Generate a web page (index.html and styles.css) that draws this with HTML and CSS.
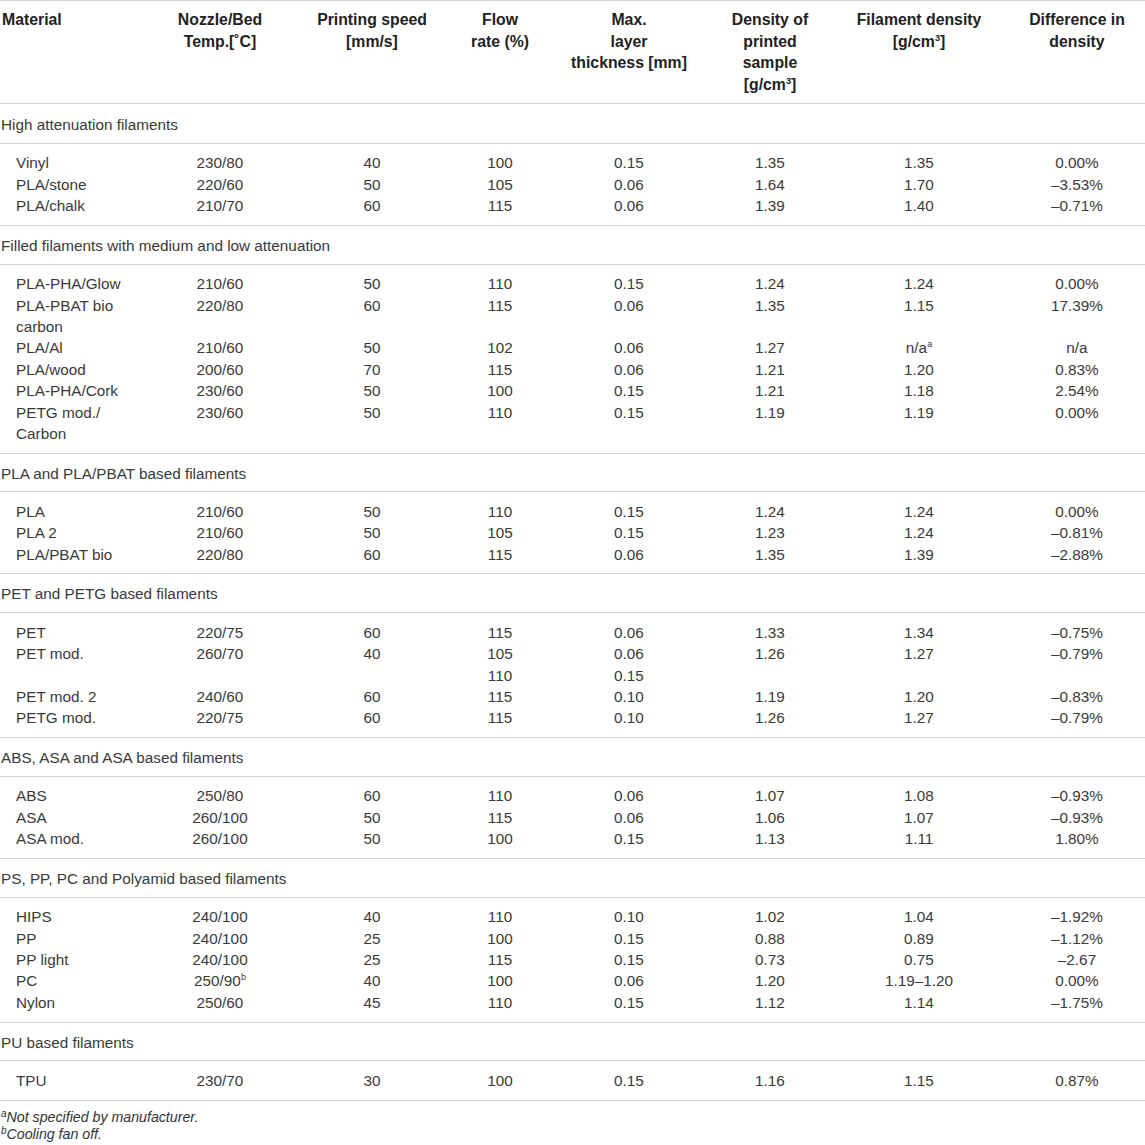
FILE: index.html
```html
<!DOCTYPE html>
<html lang="en">
<head>
<meta charset="utf-8">
<title>Printing parameters and densities</title>
<link rel="stylesheet" href="styles.css">
</head>
<body>
<table class="tbl">
  <colgroup>
    <col class="c1"><col class="c2"><col class="c3"><col class="c4"><col class="c5"><col class="c6"><col class="c7"><col class="c8">
  </colgroup>
  <thead>
    <tr>
      <th class="left">Material</th>
      <th>Nozzle/Bed<br>Temp.[˚C]</th>
      <th>Printing speed<br>[mm/s]</th>
      <th>Flow<br>rate (%)</th>
      <th>Max.<br>layer<br>thickness [mm]</th>
      <th>Density of<br>printed<br>sample<br>[g/cm<sup>3</sup>]</th>
      <th>Filament density<br>[g/cm<sup>3</sup>]</th>
      <th>Difference in<br>density</th>
    </tr>
  </thead>

  <tbody>
    <tr class="sec top"><td colspan="8">High attenuation filaments</td></tr>
    <tr class="first"><td class="mat">Vinyl</td><td>230/80</td><td>40</td><td>100</td><td>0.15</td><td>1.35</td><td>1.35</td><td>0.00%</td></tr>
    <tr><td class="mat">PLA/stone</td><td>220/60</td><td>50</td><td>105</td><td>0.06</td><td>1.64</td><td>1.70</td><td>–3.53%</td></tr>
    <tr class="last"><td class="mat">PLA/chalk</td><td>210/70</td><td>60</td><td>115</td><td>0.06</td><td>1.39</td><td>1.40</td><td>–0.71%</td></tr>
  </tbody>

  <tbody>
    <tr class="sec"><td colspan="8">Filled filaments with medium and low attenuation</td></tr>
    <tr class="first"><td class="mat">PLA-PHA/Glow</td><td>210/60</td><td>50</td><td>110</td><td>0.15</td><td>1.24</td><td>1.24</td><td>0.00%</td></tr>
    <tr><td class="mat">PLA-PBAT bio<br>carbon</td><td>220/80</td><td>60</td><td>115</td><td>0.06</td><td>1.35</td><td>1.15</td><td>17.39%</td></tr>
    <tr><td class="mat">PLA/Al</td><td>210/60</td><td>50</td><td>102</td><td>0.06</td><td>1.27</td><td>n/a<sup>a</sup></td><td>n/a</td></tr>
    <tr><td class="mat">PLA/wood</td><td>200/60</td><td>70</td><td>115</td><td>0.06</td><td>1.21</td><td>1.20</td><td>0.83%</td></tr>
    <tr><td class="mat">PLA-PHA/Cork</td><td>230/60</td><td>50</td><td>100</td><td>0.15</td><td>1.21</td><td>1.18</td><td>2.54%</td></tr>
    <tr class="last"><td class="mat">PETG mod./<br>Carbon</td><td>230/60</td><td>50</td><td>110</td><td>0.15</td><td>1.19</td><td>1.19</td><td>0.00%</td></tr>
  </tbody>

  <tbody>
    <tr class="sec"><td colspan="8">PLA and PLA/PBAT based filaments</td></tr>
    <tr class="first"><td class="mat">PLA</td><td>210/60</td><td>50</td><td>110</td><td>0.15</td><td>1.24</td><td>1.24</td><td>0.00%</td></tr>
    <tr><td class="mat">PLA 2</td><td>210/60</td><td>50</td><td>105</td><td>0.15</td><td>1.23</td><td>1.24</td><td>–0.81%</td></tr>
    <tr class="last"><td class="mat">PLA/PBAT bio</td><td>220/80</td><td>60</td><td>115</td><td>0.06</td><td>1.35</td><td>1.39</td><td>–2.88%</td></tr>
  </tbody>

  <tbody>
    <tr class="sec"><td colspan="8">PET and PETG based filaments</td></tr>
    <tr class="first"><td class="mat">PET</td><td>220/75</td><td>60</td><td>115</td><td>0.06</td><td>1.33</td><td>1.34</td><td>–0.75%</td></tr>
    <tr><td class="mat">PET mod.</td><td>260/70</td><td>40</td><td>105<br>110</td><td>0.06<br>0.15</td><td>1.26</td><td>1.27</td><td>–0.79%</td></tr>
    <tr><td class="mat">PET mod. 2</td><td>240/60</td><td>60</td><td>115</td><td>0.10</td><td>1.19</td><td>1.20</td><td>–0.83%</td></tr>
    <tr class="last"><td class="mat">PETG mod.</td><td>220/75</td><td>60</td><td>115</td><td>0.10</td><td>1.26</td><td>1.27</td><td>–0.79%</td></tr>
  </tbody>

  <tbody>
    <tr class="sec"><td colspan="8">ABS, ASA and ASA based filaments</td></tr>
    <tr class="first"><td class="mat">ABS</td><td>250/80</td><td>60</td><td>110</td><td>0.06</td><td>1.07</td><td>1.08</td><td>–0.93%</td></tr>
    <tr><td class="mat">ASA</td><td>260/100</td><td>50</td><td>115</td><td>0.06</td><td>1.06</td><td>1.07</td><td>–0.93%</td></tr>
    <tr class="last"><td class="mat">ASA mod.</td><td>260/100</td><td>50</td><td>100</td><td>0.15</td><td>1.13</td><td>1.11</td><td>1.80%</td></tr>
  </tbody>

  <tbody>
    <tr class="sec"><td colspan="8">PS, PP, PC and Polyamid based filaments</td></tr>
    <tr class="first"><td class="mat">HIPS</td><td>240/100</td><td>40</td><td>110</td><td>0.10</td><td>1.02</td><td>1.04</td><td>–1.92%</td></tr>
    <tr><td class="mat">PP</td><td>240/100</td><td>25</td><td>100</td><td>0.15</td><td>0.88</td><td>0.89</td><td>–1.12%</td></tr>
    <tr><td class="mat">PP light</td><td>240/100</td><td>25</td><td>115</td><td>0.15</td><td>0.73</td><td>0.75</td><td>–2.67</td></tr>
    <tr><td class="mat">PC</td><td>250/90<sup>b</sup></td><td>40</td><td>100</td><td>0.06</td><td>1.20</td><td>1.19–1.20</td><td>0.00%</td></tr>
    <tr class="last"><td class="mat">Nylon</td><td>250/60</td><td>45</td><td>110</td><td>0.15</td><td>1.12</td><td>1.14</td><td>–1.75%</td></tr>
  </tbody>

  <tbody>
    <tr class="sec"><td colspan="8">PU based filaments</td></tr>
    <tr class="first last"><td class="mat">TPU</td><td>230/70</td><td>30</td><td>100</td><td>0.15</td><td>1.16</td><td>1.15</td><td>0.87%</td></tr>
  </tbody>
</table>

<div class="notes">
  <p><sup>a</sup>Not specified by manufacturer.</p>
  <p><sup>b</sup>Cooling fan off.</p>
</div>
</body>
</html>
```

FILE: styles.css
```css
html, body {
  margin: 0;
  padding: 0;
  background: #ffffff;
}

body {
  font-family: "Liberation Sans", Arial, Helvetica, sans-serif;
  color: #3a3a3a;
  width: 1145px;
}

.tbl {
  width: 1145px;
  border-collapse: collapse;
  table-layout: fixed;
  font-size: 15.3px;
  line-height: 21.4px;
}

.c1 { width: 149px; }
.c2 { width: 142px; }
.c3 { width: 162px; }
.c4 { width: 94px; }
.c5 { width: 164px; }
.c6 { width: 118px; }
.c7 { width: 180px; }
.c8 { width: 136px; }

.tbl thead tr {
  border-top: 1px solid #d2d2d2;
  border-bottom: 1px solid #d2d2d2;
}

.tbl th {
  font-size: 15.8px;
  line-height: 21.5px;
  font-weight: bold;
  color: #222222;
  text-align: center;
  vertical-align: top;
  padding: 8px 0 8px 0;
}

.tbl th.left {
  text-align: left;
  padding-left: 2px;
}

.tbl td {
  text-align: center;
  vertical-align: top;
  padding: 0;
  white-space: nowrap;
}

.tbl td.mat {
  text-align: left;
  padding-left: 16px;
}

.tbl tr.sec {
  border-bottom: 1px solid #d2d2d2;
}

.tbl tr.sec td {
  text-align: left;
  padding: 9px 0 7.4px 1px;
}

.tbl tr.sec.top td {
  padding-top: 10px;
}

.tbl tr.first td {
  padding-top: 8.5px;
}

.tbl tr.last {
  border-bottom: 1px solid #d2d2d2;
}

.tbl tr.last td {
  padding-bottom: 8.3px;
}

.tbl sup {
  font-size: 9px;
  line-height: 0;
  vertical-align: 6px;
}

.notes {
  margin-top: 8px;
  font-size: 14.2px;
  line-height: 17px;
  font-style: italic;
  color: #333333;
}

.notes p {
  margin: 0;
  padding-left: 1px;
}

.notes sup {
  font-size: 10px;
  line-height: 0;
  vertical-align: 5px;
}
```
